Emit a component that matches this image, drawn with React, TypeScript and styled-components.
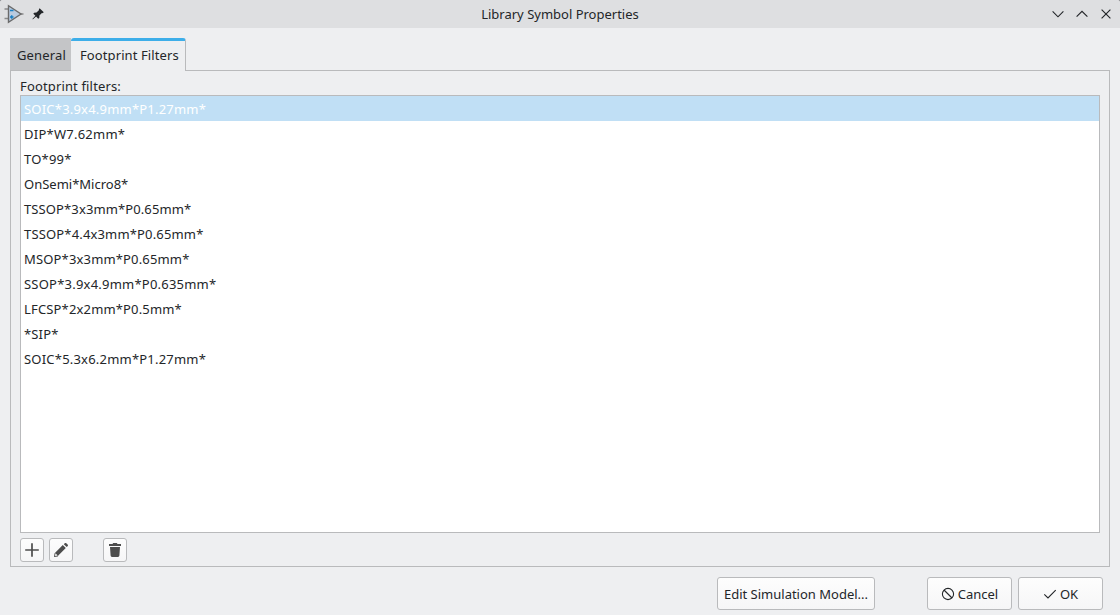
import React from 'react';
import styled, { createGlobalStyle } from 'styled-components';

const GlobalStyle = createGlobalStyle`
  * { box-sizing: border-box; }
  body {
    margin: 0;
    background: #85878a;
    overflow: hidden;
  }
`;

const Dialog = styled.div`
  width: 1120px;
  height: 615px;
  display: flex;
  flex-direction: column;
  border-radius: 3px 3px 0 0;
  background: #eeeff1;
  color: #232629;
  font: 13px/18px 'Noto Sans', sans-serif;
  white-space: nowrap;
`;

const TitleBar = styled.header`
  height: 28px;
  flex: none;
  display: grid;
  grid-template-columns: 1fr auto 1fr;
  align-items: center;
  border-radius: 3px 3px 0 0;
  background: #dedfe1;
`;

const TitleIcons = styled.div`
  display: flex;
  align-items: center;
  gap: 4px;
  padding-left: 4px;
`;

const WindowControls = styled.div`
  display: flex;
  justify-content: flex-end;
  gap: 8px;
  padding-right: 6px;
`;

const Title = styled.h1`
  margin: 0;
  font-size: inherit;
  font-weight: 400;
`;

const Icon = styled.svg`
  display: block;
  flex: none;
`;

const TabBar = styled.nav`
  display: flex;
  height: 33px;
  flex: none;
  margin: 10px 10px -1px;
`;

const Tab = styled.button<{ $active?: boolean }>`
  height: ${p => (p.$active ? 33 : 32)}px;
  width: ${p => (p.$active ? 115 : 61)}px;
  padding: ${p => (p.$active ? '0 0 3px 9px' : '2px 0 0 7px')};
  border: 0 solid #b9babc;
  border-width: ${p => (p.$active ? '3px 1px 0 0' : '0')};
  border-top-color: #3daee9;
  border-radius: ${p => (p.$active ? '3px 3px 0 0' : '0')};
  background: ${p => (p.$active ? '#eeeff1' : '#c4c5c7')};
  color: inherit;
  font: inherit;
  letter-spacing: ${p => (p.$active ? 0.1 : 0.16)}px;
  text-align: left;
  z-index: ${p => (p.$active ? 1 : 0)};
`;

const Panel = styled.section`
  height: 497px;
  flex: none;
  display: flex;
  flex-direction: column;
  margin: 0 10px;
  padding: 6px 9px 4px;
  border: 1px solid #b9babc;
`;

const Label = styled.label`
  height: 18px;
  letter-spacing: 0.15px;
`;

const FilterList = styled.ul`
  height: 438px;
  flex: none;
  margin: 0;
  padding: 0;
  border: 1px solid #b9babc;
  background: #fff;
  list-style: none;
`;

const FilterRow = styled.li<{ $selected?: boolean; $tracking: number }>`
  height: 25px;
  padding-left: 3px;
  line-height: 26px;
  letter-spacing: ${p => p.$tracking}px;
  background: ${p => (p.$selected ? '#c0dff5' : 'transparent')};
  color: ${p => (p.$selected ? '#fff' : 'inherit')};
`;

const ListTools = styled.div`
  display: flex;
  gap: 5px;
  margin-top: 5px;
`;

const Button = styled.button`
  display: flex;
  align-items: center;
  justify-content: center;
  padding: 0;
  border: 1px solid #b9babc;
  border-radius: 3px;
  background: linear-gradient(#fdfdfd, #f6f6f7);
  color: inherit;
  font: inherit;
`;

const ToolButton = styled(Button)<{ $apart?: boolean }>`
  width: 24px;
  height: 24px;
  margin-left: ${p => (p.$apart ? 25 : 0)}px;
`;

const Footer = styled.footer`
  display: flex;
  justify-content: flex-end;
  gap: 6px;
  padding: 10px 17px 0 0;
`;

const DialogButton = styled(Button)<{ $width: number; $gapAfter?: number }>`
  width: ${p => p.$width}px;
  height: 33px;
  margin-right: ${p => p.$gapAfter ?? 0}px;
  gap: 3px;
`;

const filters = [
  { name: 'SOIC*3.9x4.9mm*P1.27mm*', tracking: 0.21 },
  { name: 'DIP*W7.62mm*', tracking: 0.25 },
  { name: 'TO*99*', tracking: 0.2 },
  { name: 'OnSemi*Micro8*', tracking: 0 },
  { name: 'TSSOP*3x3mm*P0.65mm*', tracking: 0.11 },
  { name: 'TSSOP*4.4x3mm*P0.65mm*', tracking: 0.16 },
  { name: 'MSOP*3x3mm*P0.65mm*', tracking: 0.16 },
  { name: 'SSOP*3.9x4.9mm*P0.635mm*', tracking: 0.22 },
  { name: 'LFCSP*2x2mm*P0.5mm*', tracking: 0.16 },
  { name: '*SIP*', tracking: 0.16 },
  { name: 'SOIC*5.3x6.2mm*P1.27mm*', tracking: 0.21 },
];

const OpAmpIcon = () => (
  <Icon width="20" height="20" viewBox="0 0 20 20" fill="none">
    <path d="M0.5 5H4M0.5 14.5H4M17 10h2.5" stroke="#8b8b8b" strokeWidth="1.6" />
    <path d="M4.5 1.7v16.6L17 10z" fill="#b9cbe0" stroke="#6a6a6a" strokeWidth="1.4" />
    <path d="M6 6.5h3.5M6 13h3.5M7.7 11.2v3.6" stroke="#1a81c4" strokeWidth="1.5" />
  </Icon>
);

const PinIcon = () => (
  <Icon width="20" height="20" viewBox="0 0 20 20" fill="#232629">
    <path d="M11.6 4.2 15.8 8.3 14.4 9.2 13.9 8.9 11.4 11.5 11.3 13.9 10.2 14.7 8.1 12.6 5 15.3 4.5 15.2 4.6 14.7 7.4 11.8 5.3 9.7 6.2 8.7 8.5 8.6 11.1 6.1 10.8 5.4z" />
  </Icon>
);

const Control = ({ d }: { d: string }) => (
  <Icon width="16" height="16" viewBox="0 0 16 16" fill="none" stroke="#232629" strokeWidth="1.15">
    <path d={d} />
  </Icon>
);

const PlusIcon = () => (
  <Icon width="16" height="16" viewBox="0 0 16 16" fill="none" stroke="#4d4d4d" strokeWidth="1.7">
    <path d="M1.2 8h13.6M8 1.2v13.6" />
  </Icon>
);

const PencilIcon = () => (
  <Icon width="16" height="16" viewBox="0 0 16 16" fill="#4d4d4d">
    <path d="M9.8 3.1 12.8 6.1 5.3 13.5 4.8 14.4 1 15 1.6 11.2 2.4 10.6z" />
    <path d="M10.8 2.2 12 1.1Q12.7.7 13.3 1.3L14.8 2.8Q15.2 3.4 14.8 4L13.7 5.1z" />
    <path d="M2.4 11.3 4.7 13.6 2.1 14z" fill="#fafafa" />
  </Icon>
);

const TrashIcon = () => (
  <Icon width="16" height="16" viewBox="0 0 16 16" fill="#4d4d4d">
    <path d="M2 2h3.5L6.2 1h3.6l.7 1H14v2H2zM3 5h10l-.6 8.6Q12.3 15 11 15H5Q3.7 15 3.6 13.6z" />
  </Icon>
);

const CancelIcon = () => (
  <Icon width="14" height="14" viewBox="0 0 14 14" fill="none" stroke="#232629" strokeWidth="1.1">
    <circle cx="7" cy="7" r="5.6" />
    <path d="M3 3l8 8" />
  </Icon>
);

const OkIcon = () => (
  <Icon width="14" height="14" viewBox="0 0 14 14" fill="none" stroke="#232629" strokeWidth="1.1">
    <path d="M1.3 7.3 5 11 12.7 3.2" />
  </Icon>
);

export default function App() {
  return (
    <>
      <GlobalStyle />
      <Dialog>
        <TitleBar>
          <TitleIcons>
            <OpAmpIcon />
            <PinIcon />
          </TitleIcons>
          <Title>Library Symbol Properties</Title>
          <WindowControls>
            <Control d="M2.6 5.4 8 10.8 13.4 5.4" />
            <Control d="M2.6 10.7 8 5.3 13.4 10.7" />
            <Control d="M3.6 3.6 12.4 12.4M12.4 3.6 3.6 12.4" />
          </WindowControls>
        </TitleBar>
        <TabBar>
          <Tab>General</Tab>
          <Tab $active>Footprint Filters</Tab>
        </TabBar>
        <Panel>
          <Label>Footprint filters:</Label>
          <FilterList>
            {filters.map(({ name, tracking }, i) => (
              <FilterRow key={name} $selected={i === 0} $tracking={tracking}>{name}</FilterRow>
            ))}
          </FilterList>
          <ListTools>
            <ToolButton aria-label="Add"><PlusIcon /></ToolButton>
            <ToolButton aria-label="Edit"><PencilIcon /></ToolButton>
            <ToolButton aria-label="Delete" $apart><TrashIcon /></ToolButton>
          </ListTools>
        </Panel>
        <Footer>
          <DialogButton $width={158} $gapAfter={46}>Edit Simulation Model...</DialogButton>
          <DialogButton $width={85}><CancelIcon />Cancel</DialogButton>
          <DialogButton $width={85}><OkIcon />OK</DialogButton>
        </Footer>
      </Dialog>
    </>
  );
}
